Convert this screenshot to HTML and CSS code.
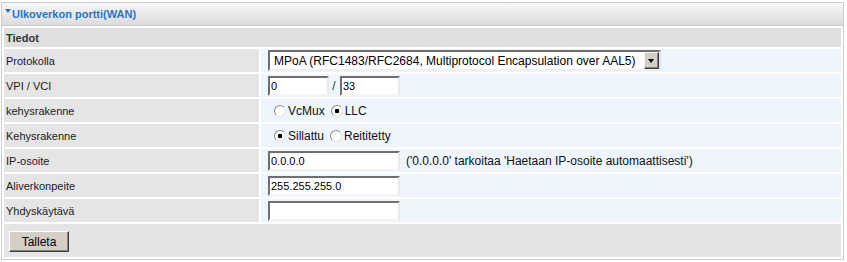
FILE: index.html
```html
<!DOCTYPE html>
<html>
<head>
<meta charset="utf-8">
<link rel="stylesheet" href="styles.css">
</head>
<body>
<div class="panel">
  <div class="title"><span class="tri"></span>Ulkoverkon portti(WAN)</div>
  <table class="form">
    <colgroup><col class="c-lbl"><col class="c-val"></colgroup>
    <tr class="head"><th colspan="2">Tiedot</th></tr>
    <tr>
      <td class="lbl">Protokolla</td>
      <td class="val">
        <span class="sel">
          <select class="select"><option>MPoA (RFC1483/RFC2684, Multiprotocol Encapsulation over AAL5)</option></select>
          <span class="sel-btn"><span class="arrow"></span></span>
        </span>
      </td>
    </tr>
    <tr>
      <td class="lbl">VPI / VCI</td>
      <td class="val"><input class="inp w-vpi" type="text" value="0"><span class="slash">/</span><input class="inp w-vci" type="text" value="33"></td>
    </tr>
    <tr>
      <td class="lbl">kehysrakenne</td>
      <td class="val"><label class="opt"><input class="radio" type="radio" name="enc">VcMux</label><label class="opt"><input class="radio" type="radio" name="enc" checked>LLC</label></td>
    </tr>
    <tr>
      <td class="lbl">Kehysrakenne</td>
      <td class="val"><label class="opt"><input class="radio" type="radio" name="mode" checked>Sillattu</label><label class="opt"><input class="radio" type="radio" name="mode">Reititetty</label></td>
    </tr>
    <tr>
      <td class="lbl">IP-osoite</td>
      <td class="val"><input class="inp w-ip" type="text" value="0.0.0.0"><span class="hint">('0.0.0.0' tarkoitaa 'Haetaan IP-osoite automaattisesti')</span></td>
    </tr>
    <tr>
      <td class="lbl">Aliverkonpeite</td>
      <td class="val"><input class="inp w-ip" type="text" value="255.255.255.0"></td>
    </tr>
    <tr>
      <td class="lbl">Yhdyskäytävä</td>
      <td class="val"><input class="inp w-ip" type="text" value=""></td>
    </tr>
    <tr class="actions">
      <td colspan="2"><button class="btn" type="button">Talleta</button></td>
    </tr>
  </table>
</div>
</body>
</html>
```

FILE: styles.css
```css
html, body {
  margin: 0;
  padding: 0;
  background: #ffffff;
}

body {
  font-family: "Liberation Sans", Arial, sans-serif;
  font-size: 11px;
  color: #111;
}

.panel {
  margin: 2px 0 0 1px;
  width: 843px;
  box-sizing: border-box;
  border: 1px solid #c9cdd1;
}

.title {
  height: 22px;
  line-height: 22px;
  border-bottom: 1px solid #c3ccd6;
  background: linear-gradient(#f6f6f6, #dcdcdc);
  color: #1f76c6;
  font-weight: bold;
  font-size: 11px;
  padding-left: 3px;
}

.tri {
  display: inline-block;
  width: 0;
  height: 0;
  border-left: 3px solid transparent;
  border-right: 3px solid transparent;
  border-top: 4px solid #1f76c6;
  vertical-align: 5px;
  margin-right: 1px;
}

.form {
  border-collapse: separate;
  border-spacing: 2px;
  table-layout: fixed;
  width: 841px;
}

.c-lbl { width: 255px; }
.c-val { width: 580px; }

.form td, .form th {
  padding: 0;
  vertical-align: middle;
}

.head th {
  height: 19px;
  text-align: left;
  background: #dfdfdf;
  font-weight: bold;
  color: #333;
  padding-left: 2px;
}

.lbl {
  height: 23px;
  background: #e5e5e5;
  padding-left: 2px !important;
  color: #1a1a1a;
}

.val {
  background: #eef5fd;
  padding-left: 7px !important;
  white-space: nowrap;
  font-size: 12px;
}

.inp {
  box-sizing: border-box;
  height: 20px;
  margin: 0;
  padding: 1px 1px 0;
  font-family: "Liberation Sans", Arial, sans-serif;
  font-size: 11px;
  color: #000;
  background: #fff;
  border-style: solid;
  border-width: 2px;
  border-color: #6f6f6f #e8e8e8 #f4f4f4 #6f6f6f;
  vertical-align: middle;
  outline: none;
}

.w-vpi { width: 61px; }
.w-vci { width: 60px; }
.w-ip { width: 132px; }

.slash {
  display: inline-block;
  width: 11px;
  padding-right: 1px;
  box-sizing: border-box;
  text-align: center;
  vertical-align: middle;
  color: #333;
}

.hint {
  margin-left: 6px;
  vertical-align: middle;
  color: #111;
}

.sel {
  position: relative;
  display: inline-block;
  vertical-align: middle;
}

.select {
  -webkit-appearance: none;
  appearance: none;
  box-sizing: border-box;
  width: 393px;
  height: 21px;
  margin: 0;
  padding: 0 0 0 4px;
  font-family: "Liberation Sans", Arial, sans-serif;
  font-size: 12px;
  color: #000;
  background: #fff;
  border-style: solid;
  border-width: 2px;
  border-color: #6f6f6f #e4e4e4 #f0f0f0 #6f6f6f;
  border-radius: 0;
  outline: none;
  display: block;
}

.sel-btn {
  position: absolute;
  top: 2px;
  right: 2px;
  width: 15px;
  height: 17px;
  box-sizing: border-box;
  background: #d4d0c8;
  border-style: solid;
  border-width: 1px;
  border-color: #f4f4f4 #404040 #404040 #f4f4f4;
  box-shadow: inset -1px -1px 0 #808080;
  pointer-events: none;
}

.arrow {
  position: absolute;
  left: 3px;
  top: 6px;
  width: 0;
  height: 0;
  border-left: 3.5px solid transparent;
  border-right: 3.5px solid transparent;
  border-top: 4px solid #000;
}

.opt {
  display: inline-block;
  vertical-align: middle;
  margin-right: 4px;
  color: #111;
}

.radio {
  -webkit-appearance: none;
  appearance: none;
  box-sizing: border-box;
  width: 12px;
  height: 12px;
  margin: 0 2px 0 6px;
  border-radius: 50%;
  border: 1px solid #8a8a8a;
  border-right-color: #e0e0e0;
  border-bottom-color: #e0e0e0;
  background: #fff;
  vertical-align: -2px;
  outline: none;
}

.opt + .opt .radio {
  margin-left: 2px;
}

.radio:checked {
  background: radial-gradient(circle at center, #000 0, #000 2px, #fff 2.6px);
}

.actions td {
  height: 33px;
  background: #e4e4e4;
  padding-left: 5px !important;
  vertical-align: middle;
}

.btn {
  box-sizing: border-box;
  width: 60px;
  height: 21px;
  margin: 2px 0 0 0;
  padding: 0;
  font-family: "Liberation Sans", Arial, sans-serif;
  font-size: 12px;
  color: #000;
  background: #d4d0c8;
  border-style: solid;
  border-width: 1px;
  border-color: #ffffff #404040 #404040 #ffffff;
  box-shadow: inset -1px -1px 0 #808080;
  border-radius: 0;
}
```
